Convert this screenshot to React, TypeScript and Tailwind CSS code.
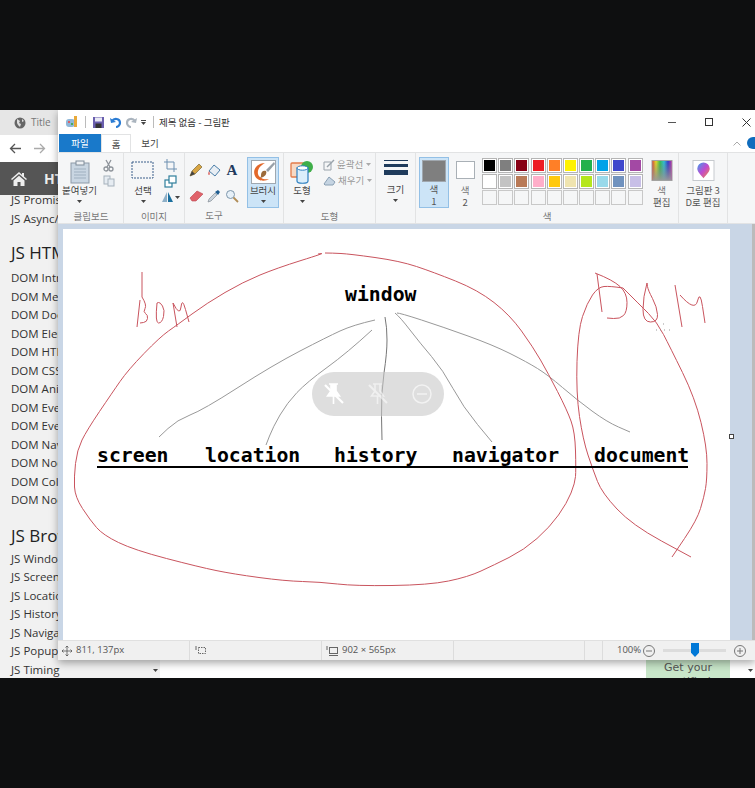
import React from "react";

type P = [number, number];
const smooth = (pts: P[]) => {
  let d = `M${pts[0][0]} ${pts[0][1]}`;
  for (let i = 1; i < pts.length - 1; i++) {
    const mx = (pts[i][0] + pts[i + 1][0]) / 2;
    const my = (pts[i][1] + pts[i + 1][1]) / 2;
    d += ` Q${pts[i][0]} ${pts[i][1]} ${mx} ${my}`;
  }
  const l = pts[pts.length - 1];
  return d + ` L${l[0]} ${l[1]}`;
};

const red: P[][] = [
  [[325,253],[332,253],[350,254],[400,261],[433,272],[478,290],[510,315],[533,347],[548,373],[567,410],[575,432],[576,470],[575,483],[567,503],[550,527],[524,550],[494,565],[468,577],[429,585],[355,586],[320,582],[285,581],[233,574],[199,567],[134,550],[103,535],[90,520],[75,497],[74,477],[77,450],[87,430],[112,393],[128,370],[160,337],[177,325],[207,303],[243,282],[277,268],[325,253],[318,254]],
  [[623,288],[610,286],[598,287],[587,303],[578,330],[576,393],[583,440],[593,470],[602,493],[632,525],[691,557]],
  [[623,288],[640,305],[657,322],[670,347],[695,398],[707,447],[707,480],[704,497],[697,520],[672,557]],
  [[597,274],[602,312]],
  [[595,273],[613,280],[627,293],[627,312],[620,319],[607,318]],
  [[647,283],[643,297],[643,322],[658,322],[657,307],[648,290],[647,283]],
  [[675,285],[682,327]],
  [[680,295],[695,312],[700,290],[705,323]],
  [[142,272],[142,297]],
  [[140,300],[137,327]],
  [[142,297],[147,305],[143,312],[148,315],[147,322],[140,323]],
  [[157,303],[155,323],[162,323],[165,310],[160,302],[157,303]],
  [[173,303],[177,327]],
  [[173,303],[180,317],[182,297],[189,322]],
];
const grey: P[][] = [
  [[375,320],[353,325],[327,337],[273,365],[203,410],[177,420],[159,437]],
  [[372,330],[347,353],[307,382],[287,403],[273,427],[266,445]],
  [[385,317],[387,327],[387,353],[381,393],[382,440]],
  [[395,313],[400,317],[420,343],[443,370],[463,407],[492,442]],
  [[397,313],[400,313],[443,327],[493,345],[527,362],[548,375],[577,400],[607,422],[630,432]],
];

const palette = [
  "#000000","#7f7f7f","#880015","#ed1c24","#ff7f27","#fff200","#22b14c","#00a2e8","#3f48cc","#a349a4",
  "#ffffff","#c3c3c3","#b97a57","#ffaec9","#ffc90e","#efe4b0","#b5e61d","#99d9ea","#7092be","#c8bfe7",
];

const domItems = ["DOM Intro","DOM Methods","DOM Document","DOM Elements","DOM HTML","DOM CSS","DOM Animations","DOM Events","DOM Event Listener","DOM Navigation","DOM Nodes","DOM Collections","DOM Node Lists"];
const bomItems = ["JS Window","JS Screen","JS Location","JS History","JS Navigator","JS Popup Alert","JS Timing"];

const Caret = ({ c = "#444" }: { c?: string }) => (
  <svg width="5" height="3" viewBox="0 0 5 3"><path d="M0 0h5L2.5 3z" fill={c} /></svg>
);

const Big = ({ icon, label, active }: { icon: React.ReactNode; label: string; active?: boolean }) => (
  <div className={`flex flex-col items-center w-[32px] h-[51px] border ${active ? "bg-[#cce4f7] border-[#93c0e6]" : "border-transparent"}`}>
    <div className="h-[26px] pt-[2px] flex items-start justify-center">{icon}</div>
    <div className="h-[12px] leading-[12px] whitespace-nowrap text-[9.5px] text-[#444]">{label}</div>
    <div className="h-[10px] flex items-center"><Caret /></div>
  </div>
);

const Group = ({ w, label, children, last, border = true }: { w: string; label?: string; children: React.ReactNode; last?: boolean; border?: boolean }) => (
  <div className={`${w} shrink-0 h-full flex flex-col ${border ? "border-r border-[#e2e3e4]" : ""} ${last ? "" : ""}`}>
    <div className="h-[55px] pt-[4px] flex justify-center">{children}</div>
    <div className="h-[16px] leading-[14px] pt-[1px] text-center text-[9.5px] text-[#777]">{label}</div>
  </div>
);

const PinIcon = ({ filled, o = 1 }: { filled?: boolean; o?: number }) => (
  <svg width="20" height="24" viewBox="0 0 20 24" opacity={o} fill="none" stroke="#fff" strokeWidth="1.6">
    <path d="M5 2h9M7 2v7L3.500 14h12L12 9V2M9.500 14v8" fill={filled ? "#fff" : "none"} />
    <path d="M1 3l18 18" strokeWidth="2.200" />
  </svg>
);

export default function App() {
  return (
    <div className="w-[755px] h-[788px] bg-[#0e0f10] flex flex-col overflow-hidden font-['Noto_Sans_CJK_KR','Noto_Sans',sans-serif]">
      <div className="h-[110px] shrink-0" />
      <div className="relative h-[568px] shrink-0 overflow-hidden bg-white">
        {/* Browser behind */}
        <div className="flex items-center h-[25px] bg-[#e6e6e6] pl-[14px] gap-[5px]">
          <svg width="12" height="12" viewBox="0 0 12 12"><circle cx="6" cy="6" r="5.500" fill="#666" /><path d="M3 2l3 2-1 2 2 1-1 3-2-2-1-2zM8 2l2 2-2 1z" fill="#ddd" /></svg>
          <span className="text-[10px] text-[#777] font-['Open_Sans',sans-serif]">Title</span>
        </div>
        <div className="flex items-center h-[27px] bg-white pl-[9px] gap-[11px]">
          <svg width="13" height="13" viewBox="0 0 13 13" fill="none" stroke="#555" strokeWidth="1.300"><path d="M12 6.500H1.500M6 2L1.500 6.500 6 11" /></svg>
          <svg width="13" height="13" viewBox="0 0 13 13" fill="none" stroke="#aaa" strokeWidth="1.300"><path d="M1 6.500h10.500M7 2l4.500 4.500L7 11" /></svg>
        </div>
        <div className="flex items-center h-[33px] bg-[#555555] pl-[11px] gap-[17px]">
          <svg width="16" height="14" viewBox="0 0 16 14" fill="#eee"><path d="M8 0L0 7l1 1 7-6 7 6 1-1-3-2.600V1h-2v1.700zM2.500 8.500V14h4v-4h3v4h4V8.500L8 3.700z" /></svg>
          <span className="text-[14px] font-bold text-[#eee] font-['Open_Sans',sans-serif]">HTML</span>
        </div>
        <div className="flex h-[483px]">
          <div className="w-[160px] bg-[#f1f1f1] pl-[11px] pt-[-0px] relative font-['Open_Sans',sans-serif] text-[#333] text-[11.500px] leading-[18.500px] whitespace-nowrap overflow-hidden">
            <div className="h-[18.500px] mt-[-4px]">JS Promises</div>
            <div>JS Async/Await</div>
            <div className="text-[17px] leading-[22px] text-[#222] mt-[14px] mb-[5px]">JS HTML DOM</div>
            {domItems.map((t) => <div key={t}>{t}</div>)}
            <div className="text-[17px] leading-[22px] text-[#222] mt-[15px] mb-[3px]">JS Browser BOM</div>
            {bomItems.map((t) => <div key={t}>{t}</div>)}
            <div className="absolute right-[2px] bottom-[6px]"><Caret /></div>
          </div>
          <div className="flex-1 flex justify-end items-end bg-white">
            <div className="w-[84px] h-[18px] bg-[#c8e6c9] text-center text-[11px] leading-[14px] pt-[1px] text-[#555] overflow-hidden font-['DejaVu_Sans',sans-serif] mr-[18px]">Get your certified</div>
            <div className="pb-[6px] pr-[2px]"><Caret /></div>
          </div>
        </div>

        {/* Paint window */}
        <div className="absolute left-[58px] top-0 w-[697px] h-[550px] flex flex-col bg-white shadow-[0_3px_8px_rgba(0,0,0,0.35)]">
          {/* title bar */}
          <div className="h-[24px] shrink-0 flex items-center bg-white pl-[7px] text-[10px] text-[#333]">
            <svg width="14" height="14" viewBox="0 0 14 14"><rect x="1" y="4" width="9" height="8" rx="3" fill="#8fb7d8" /><circle cx="4" cy="7" r="1" fill="#e44" /><circle cx="7" cy="9" r="1" fill="#3a3" /><path d="M9 1h3v11H9z" fill="#e8a93a" /></svg>
            <div className="w-px h-[12px] bg-[#bbb] ml-[6px] mr-[4px]" />
            <svg width="13" height="13" viewBox="0 0 13 13" className="ml-[2px]"><rect x="1" y="1" width="11" height="11" fill="#6a5fae" /><rect x="3" y="1.500" width="7" height="4" fill="#e8e8f4" /><rect x="3.500" y="7.500" width="6" height="4.500" fill="#333" /></svg>
            <svg width="13" height="13" viewBox="0 0 13 13" className="ml-[4px]" fill="none"><path d="M3 5c2-3 8-3 8 2 0 2-2 4-4 4" stroke="#2b7cd3" strokeWidth="2.200" /><path d="M1 2l1 5 5-1z" fill="#2b7cd3" /></svg>
            <svg width="13" height="13" viewBox="0 0 13 13" className="ml-[3px]" fill="none"><path d="M10 5C8 2 2 2 2 7c0 2 2 4 4 4" stroke="#aab4be" strokeWidth="2.200" /><path d="M12 2l-1 5-5-1z" fill="#aab4be" /></svg>
            <div className="ml-[3px] flex flex-col items-center gap-[1px]"><div className="w-[5px] h-px bg-[#444]" /><Caret /></div>
            <div className="w-px h-[12px] bg-[#bbb] ml-[7px] mr-[5px]" />
            <span className="text-[9.500px] whitespace-nowrap">제목 없음 - 그림판</span>
            <div className="ml-auto flex items-center">
              <div className="w-[8px] h-px bg-[#555] mr-[29px]" />
              <div className="w-[8px] h-[8px] border border-[#333] mr-[29px]" />
              <svg width="9" height="9" viewBox="0 0 9 9" className="mr-[4px]" stroke="#333" strokeWidth="1"><path d="M0.500 0.500l8 8M8.500 0.500l-8 8" /></svg>
            </div>
          </div>
          {/* tabs */}
          <div className="h-[18px] shrink-0 flex items-stretch text-[9.500px] bg-white relative">
            <div className="ml-[1px] w-[42px] bg-[#1979ca] text-white text-center leading-[18px]">파일</div>
            <div className="w-[30px] text-center leading-[18px] text-[#333] border-x border-t border-[#e2e3e4]">홈</div>
            <div className="w-[38px] text-center leading-[18px] text-[#444]">보기</div>
            <div className="ml-auto flex items-center">
              <svg width="8" height="5" viewBox="0 0 8 5" fill="none" stroke="#aaa"><path d="M0.500 4.500L4 1l3.500 3.500" /></svg>
              <div className="w-[8px] h-[12px] ml-[6px] bg-[#0f6cbd] rounded-l-full" />
            </div>
          </div>
          {/* ribbon */}
          <div className="h-[72px] shrink-0 flex bg-[#f5f6f7] border-y border-[#e2e3e4] pl-[1px]">
            <Group w="w-[65px]" label="클립보드">
              <Big label="붙여넣기" icon={
                <svg width="20" height="24" viewBox="0 0 20 24"><rect x="1" y="3" width="18" height="20" fill="#c9d6e2" stroke="#8d9aa8" /><rect x="6" y="1" width="8" height="4" fill="#eef1f4" stroke="#7e8b99" /><path d="M4 9h12M4 12h12M4 15h12M4 18h12" stroke="#9fb0c0" /></svg>
              } />
              <div className="w-[20px] ml-[3px] flex flex-col items-center pt-[2px] gap-[3px]">
                <svg width="11" height="13" viewBox="0 0 11 13" fill="none" stroke="#8d939a" strokeWidth="1.300"><path d="M3 1l4 7M8 1L4 8" /><circle cx="3" cy="10" r="2" /><circle cx="8" cy="10" r="2" /></svg>
                <svg width="12" height="12" viewBox="0 0 12 12" fill="#e6ecf2" stroke="#a6b1bc"><rect x="1" y="1" width="6" height="8" /><rect x="5" y="4" width="6" height="7" /></svg>
              </div>
            </Group>
            <Group w="w-[61px]" label="이미지">
              <Big label="선택" icon={
                <svg width="24" height="20" viewBox="0 0 24 20"><rect x="1" y="2" width="21" height="16" fill="none" stroke="#3a5f8a" strokeDasharray="2 1" /></svg>
              } />
              <div className="flex flex-col items-center w-[22px] pt-[2px] gap-[3px]">
                <svg width="13" height="13" viewBox="0 0 13 13" fill="none" stroke="#6c8fb0"><path d="M3 0v10h10M0 3h10v10" /></svg>
                <svg width="13" height="13" viewBox="0 0 13 13" fill="#fff" stroke="#2f7f9c" strokeWidth="1.200"><rect x="1" y="5" width="7" height="7" /><rect x="5" y="1" width="7" height="7" /></svg>
                <div className="flex items-center gap-[1px]">
                  <svg width="13" height="12" viewBox="0 0 13 12"><path d="M6 1L1 11h5z" fill="#8eb0c8" /><path d="M7 1l5 10H7z" fill="#1b6f9e" /></svg>
                  <Caret />
                </div>
              </div>
            </Group>
            <Group w="w-[58px]" label="도구" border={false}>
              <div className="grid grid-cols-3 w-[52px] pt-[6px] gap-x-[2px] gap-y-[7px] justify-items-center">
                <svg width="14" height="14" viewBox="0 0 14 14"><path d="M1 13l2-5 7-7 3 3-7 7z" fill="#d8a544" stroke="#7a6a3a" strokeWidth=".7" /><path d="M1 13l2-5 3 3z" fill="#444" /></svg>
                <svg width="15" height="15" viewBox="0 0 15 15"><path d="M2 8l5-6 6 5-5 6z" fill="#e8eef4" stroke="#4a7ea8" /><path d="M2 8c-1 2-1 4 0 4s1-2 0-4z" fill="#d9534f" /></svg>
                <span className="font-['Liberation_Serif',serif] font-bold text-[15px] leading-[15px] text-[#223a5e]">A</span>
                <svg width="15" height="13" viewBox="0 0 15 13"><path d="M1 9l7-7 6 3-7 7H3z" fill="#e0636b" stroke="#b9444d" strokeWidth=".6" /></svg>
                <svg width="14" height="14" viewBox="0 0 14 14"><path d="M1 13l1-3 6-6 2 2-6 6z" fill="#c9d3dc" stroke="#77808a" strokeWidth=".6" /><path d="M8 3l3-2 2 2-2 3z" fill="#1e5c8f" /></svg>
                <svg width="14" height="14" viewBox="0 0 14 14" fill="none"><circle cx="5.500" cy="5.500" r="4" fill="#e6f0f8" stroke="#7d96ab" /><path d="M8.500 8.500L13 13" stroke="#b08d57" strokeWidth="1.800" /></svg>
              </div>
            </Group>
            <Group w="w-[41px]" border={true}>
              <Big active label="브러시" icon={
                <svg width="25" height="24" viewBox="0 0 25 24"><rect x=".5" y=".5" width="24" height="23" fill="#fff" stroke="#9fa8b0" /><path d="M14 3C6 3 1 10 4 16c2 5 10 6 14 3-5 1-10-1-11-5-1-5 3-9 7-11z" fill="#e2682a" /><path d="M10 15c0-4 3-5 5-4 1 2 0 6-6 7 1-1 1-2 1-3z" fill="#9c6b3a" /><path d="M15 10l8-8 1 2-7 8z" fill="#98a0a8" /></svg>
              } />
            </Group>
            <Group w="w-[92px]" label="도형">
              <Big label="도형" icon={
                <svg width="24" height="24" viewBox="0 0 24 24"><rect x="1" y="3" width="15" height="14" rx="1" fill="#f7d9c4" stroke="#e27b4a" strokeWidth="1.300" /><circle cx="17" cy="7" r="6" fill="#3fae49" /><path d="M7 8h11v13c0 3-11 3-11 0z" fill="#dbeefb" stroke="#2c7fc0" strokeWidth="1.200" /><ellipse cx="12.500" cy="8" rx="5.500" ry="2.200" fill="#fff" stroke="#2c7fc0" /></svg>
              } />
              <div className="flex flex-col w-[50px] ml-[5px] pt-[1px] text-[9.500px] text-[#999] gap-[3px]">
                <div className="flex items-center gap-[2px] whitespace-nowrap h-[13px]">
                  <svg width="12" height="12" viewBox="0 0 12 12" fill="none" stroke="#9aa3ab"><path d="M1 3h7v8H1z" /><path d="M4 8l7-7" strokeWidth="1.500" /></svg>
                  윤곽선<span className="ml-[1px]"><Caret c="#aaa" /></span>
                </div>
                <div className="flex items-center gap-[2px] whitespace-nowrap h-[13px]">
                  <svg width="13" height="12" viewBox="0 0 13 12"><path d="M1 9l5-7 6 5-2 3H2z" fill="#c5d4e2" stroke="#8aa0b4" /></svg>
                  채우기<span className="ml-[1px]"><Caret c="#aaa" /></span>
                </div>
              </div>
            </Group>
            <Group w="w-[40px]" label="">
              <div className="flex flex-col items-center w-[32px]">
                <div className="h-[26px] pt-[3px] flex flex-col gap-[3px]">
                  <div className="w-[24px] h-px bg-[#1f3b5c]" />
                  <div className="w-[24px] h-[3px] bg-[#1f3b5c]" />
                  <div className="w-[24px] h-[5px] bg-[#1f3b5c]" />
                </div>
                <div className="h-[12px] leading-[12px] text-[9.500px] text-[#444]">크기</div>
                <div className="h-[10px] flex items-center"><Caret /></div>
              </div>
            </Group>
            <Group w="w-[263px]" label="색">
              <div className="w-[263px] flex pl-[3px]">
                <div className="w-[31px] h-[51px] border border-[#93c0e6] bg-[#cce4f7] flex flex-col items-center pt-[2px]">
                  <div className="w-[24px] h-[24px] bg-[#7f7f7f] border border-[#a0a7ae]" />
                  <div className="text-[9.500px] leading-[12px] mt-[1px] text-[#555]">색</div>
                  <div className="text-[9.500px] leading-[12px] text-[#555]">1</div>
                </div>
                <div className="w-[32px] h-[51px] flex flex-col items-center pt-[4px]">
                  <div className="w-[19px] h-[19px] bg-white border border-[#a9b0b6] mb-[4px]" />
                  <div className="text-[9.500px] leading-[12px] mt-[1px] text-[#777]">색</div>
                  <div className="text-[9.500px] leading-[12px] text-[#555]">2</div>
                </div>
                <div className="grid grid-cols-[repeat(10,16.200px)] auto-rows-[16px] mt-[1px] ml-[1px]">
                  {palette.map((c, i) => (
                    <div key={i} className="w-[15px] h-[15px] border border-[#b5b5b5] p-px bg-white">
                      <div className="w-full h-full" style={{ background: c }} />
                    </div>
                  ))}
                  {Array.from({ length: 10 }).map((_, i) => (
                    <div key={i} className="w-[15px] h-[15px] border border-[#c8c8c8] bg-[#f5f6f7]" />
                  ))}
                </div>
                <div className="w-[34px] ml-[1px] flex flex-col items-center pt-[3px]">
                  <svg width="22" height="22" viewBox="0 0 22 22">
                    <defs>
                      <linearGradient id="rb" x1="0" x2="1" y1="0" y2="0">
                        <stop offset="0" stopColor="#e8332a" /><stop offset=".2" stopColor="#f2e61e" /><stop offset=".4" stopColor="#2fc44a" /><stop offset=".6" stopColor="#25c8e0" /><stop offset=".8" stopColor="#2a35d6" /><stop offset="1" stopColor="#d92ab0" />
                      </linearGradient>
                      <linearGradient id="fd" x1="0" x2="0" y1="0" y2="1">
                        <stop offset="0" stopColor="#777" stopOpacity=".1" /><stop offset="1" stopColor="#999" stopOpacity=".95" />
                      </linearGradient>
                    </defs>
                    <rect x=".5" y=".5" width="21" height="21" fill="url(#rb)" stroke="#a0a0a0" /><rect x="1" y="1" width="20" height="20" fill="url(#fd)" />
                  </svg>
                  <div className="text-[9.500px] leading-[12px] mt-[3px] text-[#777]">색</div>
                  <div className="text-[9.500px] leading-[12px] text-[#555]">편집</div>
                </div>
              </div>
            </Group>
            <Group w="w-[49px]" label="">
              <div className="flex flex-col items-center pt-[3px] w-[49px]">
                <svg width="23" height="22" viewBox="0 0 23 22">
                  <defs><linearGradient id="p3" x1="0" x2="1" y1="0" y2="1"><stop offset="0" stopColor="#3aa0ee" /><stop offset=".5" stopColor="#c04ad0" /><stop offset="1" stopColor="#f5883a" /></linearGradient></defs>
                  <rect x=".5" y=".5" width="22" height="21" fill="#fff" stroke="#c4c8cc" />
                  <path d="M11.500 19C8 15 5 12.500 5 9a6.500 6.500 0 0113 0c0 3.500-3 6-6.500 10z" fill="url(#p3)" />
                </svg>
                <div className="text-[9.500px] leading-[12px] mt-[3px] text-[#555] whitespace-nowrap">그림판 3</div>
                <div className="text-[9.500px] leading-[12px] text-[#555] whitespace-nowrap">D로 편집</div>
              </div>
            </Group>
          </div>
          {/* canvas area */}
          <div className="flex-1 min-h-0 bg-[#c9d6e6] pl-[5px] pt-[5px] flex relative">
            <div className="w-[667px] h-full bg-white relative shrink-0">
              <svg className="absolute inset-0" width="667" height="411" viewBox="63 229 667 411" fill="none">
                {grey.map((p, i) => <path key={i} d={smooth(p)} stroke={i === 2 ? "#777" : "#999"} strokeWidth="1" />)}
                {red.map((p, i) => <path key={i} d={smooth(p)} stroke="#c9545e" strokeWidth="1" strokeLinejoin="round" />)}
                <path d="M656 330h1M660 330h1M664 330h1M669 330h1M663 324h1" stroke="#999" />
              </svg>
              <div className="absolute top-0 left-0 w-full h-full font-['DejaVu_Sans_Mono',monospace] font-bold text-[19.800px] leading-[24px] text-black">
                <span className="absolute left-[282px] top-[54px]">window</span>
                <span className="absolute left-[34px] top-[215px]">screen</span>
                <span className="absolute left-[142px] top-[215px]">location</span>
                <span className="absolute left-[271px] top-[215px]">history</span>
                <span className="absolute left-[389px] top-[215px]">navigator</span>
                <span className="absolute left-[531px] top-[215px]">document</span>
                <div className="absolute left-[34px] top-[237px] w-[591px] h-[2px] bg-black" />
              </div>
              {/* overlay pill */}
              <div className="absolute left-[249px] top-[143px] w-[132px] h-[44px] rounded-[22px] bg-[#c8c8c8]/60 flex items-center justify-between pl-[12px] pr-[12px]">
                <PinIcon filled />
                <PinIcon o={0.55} />
                <svg width="20" height="20" viewBox="0 0 20 20" fill="none" stroke="#fff" strokeOpacity=".6" strokeWidth="1.500"><circle cx="10" cy="10" r="9" /><path d="M5 10h10" /></svg>
              </div>
            </div>
            <div className="absolute left-[671px] top-[210px] w-[5px] h-[5px] bg-white border border-[#444]" />
            <div className="absolute right-0 top-0 bottom-0 w-[3px] bg-[#bbb]" />
          </div>
          {/* status bar */}
          <div className="h-[20px] shrink-0 flex items-center bg-[#f0f0f0] border-t border-[#e0e0e0] text-[9.500px] text-[#555] font-['Open_Sans',sans-serif]">
            <div className="w-[132px] h-full border-r border-[#dcdcdc] flex items-center pl-[4px] gap-[4px]">
              <svg width="10" height="10" viewBox="0 0 10 10" stroke="#555" fill="none"><path d="M5 0v10M0 5h10M3.500 1.500L5 0l1.500 1.500M3.500 8.500L5 10l1.500-1.500M1.500 3.500L0 5l1.500 1.500M8.500 3.500L10 5 8.500 6.500" strokeWidth=".8" /></svg>
              811, 137px
            </div>
            <div className="w-[132px] h-full border-r border-[#dcdcdc] flex items-center pl-[5px]">
              <svg width="11" height="10" viewBox="0 0 11 10" fill="none" stroke="#666"><path d="M1 0v4" /><rect x="3.500" y="1.500" width="7" height="6" strokeDasharray="1.500 1" /></svg>
            </div>
            <div className="w-[132px] h-full border-r border-[#dcdcdc] flex items-center pl-[4px] gap-[4px]">
              <svg width="12" height="10" viewBox="0 0 12 10" fill="none" stroke="#666"><path d="M1 0v4" /><rect x="3.500" y="1.500" width="8" height="6" /><path d="M3 9.500h9" /></svg>
              902 × 565px
            </div>
            <div className="w-[131px] h-full border-r border-[#dcdcdc]" />
            <div className="w-[18px] h-full border-r border-[#dcdcdc]" />
            <div className="flex items-center pl-[14px]">
              <span className="w-[26px]">100%</span>
              <svg width="12" height="12" viewBox="0 0 12 12" fill="none" stroke="#777"><circle cx="6" cy="6" r="5.500" /><path d="M3 6h6" /></svg>
              <div className="relative w-[63px] h-[3px] bg-[#dcdcdc] ml-[8px]">
                <div className="absolute left-[28px] top-[-6px] w-[8px] h-[14px] bg-[#0078d7] [clip-path:polygon(0_0,100%_0,100%_70%,50%_100%,0_70%)]" />
              </div>
              <svg width="12" height="12" viewBox="0 0 12 12" fill="none" stroke="#777" className="ml-[8px]"><circle cx="6" cy="6" r="5.500" /><path d="M3 6h6M6 3v6" /></svg>
            </div>
          </div>
        </div>
      </div>
      <div className="flex-1" />
    </div>
  );
}
